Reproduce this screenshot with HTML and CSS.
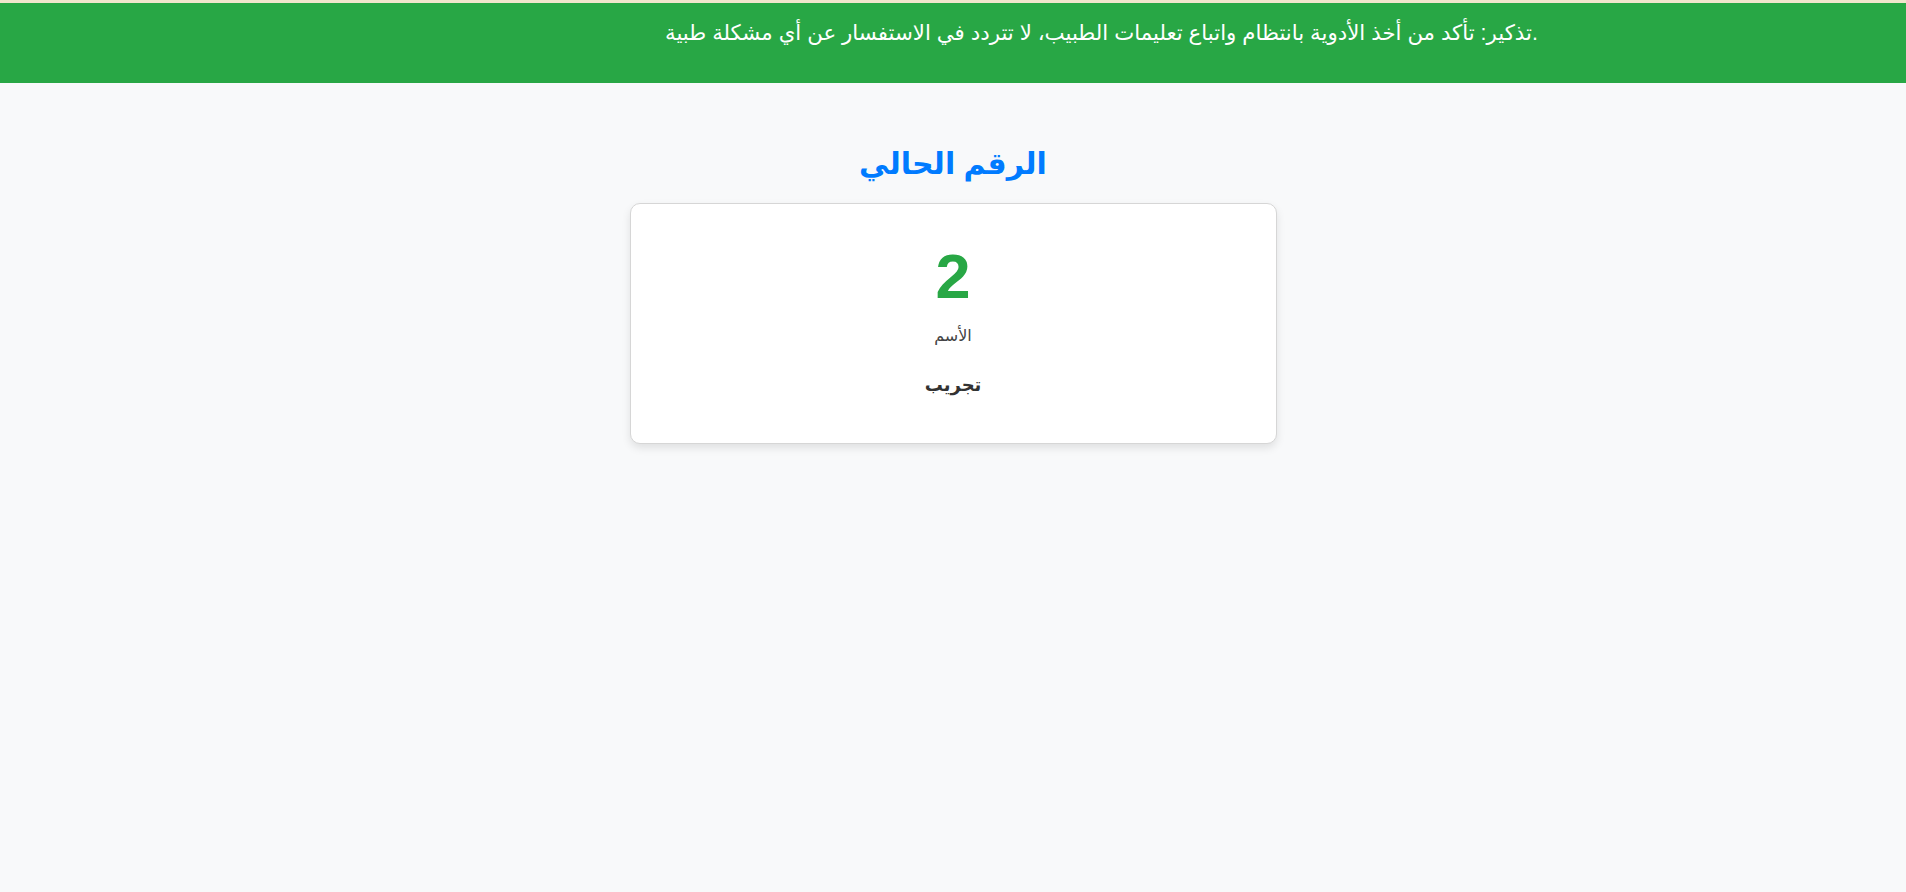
FILE: index.html
```html
<!DOCTYPE html>
<html lang="ar">
<head>
<meta charset="utf-8">
<title>الرقم الحالي</title>
<link rel="stylesheet" href="styles.css">
</head>
<body>
<div class="topline"></div>
<div class="notice"><span class="notice-text">تذكير: تأكد من أخذ الأدوية بانتظام واتباع تعليمات الطبيب، لا تتردد في الاستفسار عن أي مشكلة طبية.</span></div>
<main class="main">
  <h1 class="title">الرقم الحالي</h1>
  <section class="card">
    <div class="number">2</div>
    <div class="label">الأسم</div>
    <div class="value">تجريب</div>
  </section>
</main>
</body>
</html>
```

FILE: styles.css
```css
html, body {
  margin: 0;
  padding: 0;
}
body {
  background: #f8f9fa;
  font-family: "Liberation Sans", Arial, "DejaVu Sans", sans-serif;
  color: #333;
  height: 892px;
}
.topline {
  height: 3px;
  background: #f1e6cc;
}
.notice {
  background: #28a745;
  color: #fff;
  height: 80px;
  box-sizing: border-box;
  padding-top: 17px;
  padding-left: 665px;
  font-size: 21.3px;
  white-space: nowrap;
}
.main {
  text-align: center;
}
.title {
  color: #007bff;
  font-size: 30px;
  font-weight: bold;
  margin: 63px 0 22px;
}
.card {
  width: 647px;
  box-sizing: border-box;
  margin: 0 auto;
  background: #fff;
  border: 1px solid #d6d6d6;
  border-radius: 10px;
  box-shadow: 0 4px 8px rgba(0, 0, 0, 0.1);
  padding: 38px 20px 47px;
}
.number {
  color: #28a745;
  font-size: 63px;
  font-weight: bold;
  line-height: 1.1;
}
.label {
  font-size: 16px;
  color: #444;
  margin-top: 15px;
}
.value {
  font-size: 18px;
  font-weight: bold;
  color: #333;
  margin-top: 29px;
}
```
